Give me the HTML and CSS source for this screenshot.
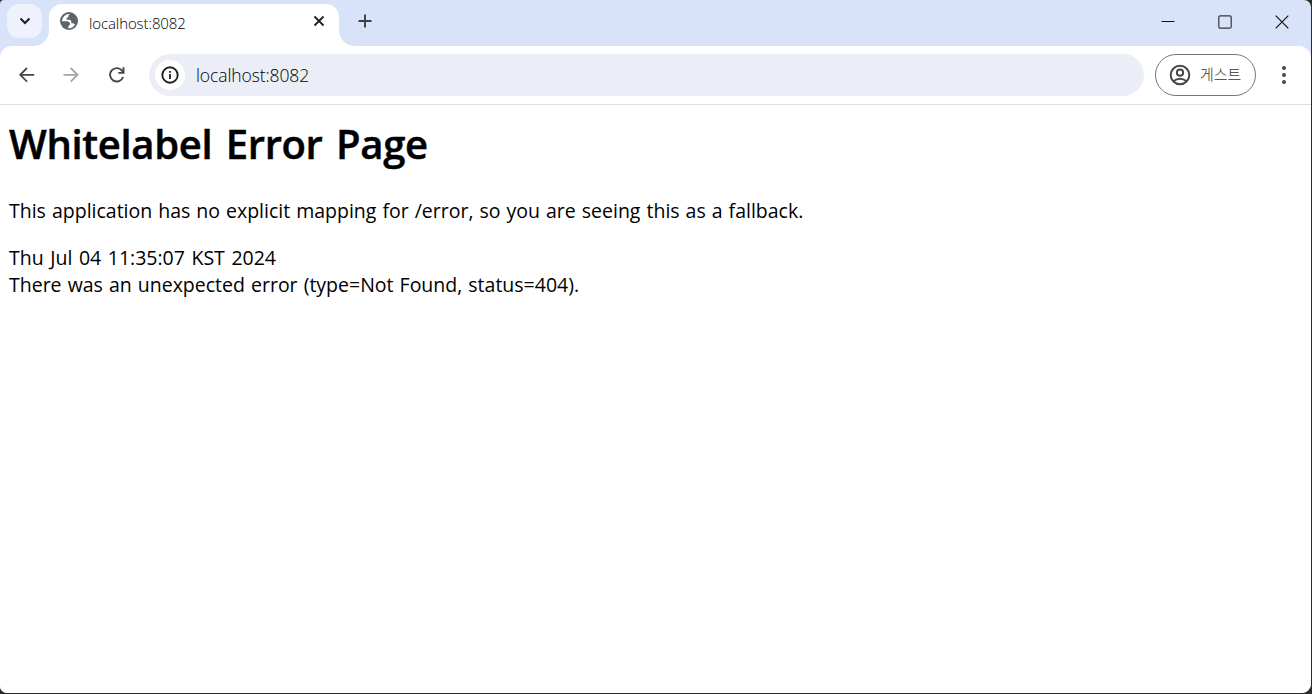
FILE: index.html
```
<!DOCTYPE html>
<html lang="ko">
<head>
<meta charset="utf-8">
<title>localhost:8082</title>
<link rel="stylesheet" href="styles.css">
</head>
<body>
<div class="window">
  <header class="tabstrip">
    <button class="tab-search" aria-label="Search tabs">
      <svg width="12" height="8" viewBox="0 0 12 8"><path d="M1.500 1.500 6 6l4.500-4.500" fill="none" stroke="#1f1f1f" stroke-width="2"/></svg>
    </button>
    <div class="tab">
      <svg class="globe" width="20" height="20" viewBox="0 0 20 20">
        <circle cx="10" cy="10" r="9" fill="#5f6368"/>
        <path d="M10.800 3.100 9.300 4.800v1.500L7.600 7.100v1.700H11l1.300 1.500v1.900h1.900l1.900 1.400A7.200 7.200 0 0 1 9.300 17.200v-1.800L11 13.600v-1.500L8.900 10.300H2.900A7.200 7.200 0 0 1 10.800 3.100Z" fill="#fff"/>
      </svg>
      <span class="tab-title">localhost:8082</span>
      <svg class="tab-close" width="12" height="12" viewBox="0 0 12 12"><path d="M1.500 1.500l9 9M10.500 1.500l-9 9" stroke="#1f1f1f" stroke-width="1.800"/></svg>
    </div>
    <svg class="new-tab" width="14" height="14" viewBox="0 0 14 14"><path d="M7 .5v13M.5 7h13" stroke="#3c3f43" stroke-width="1.900"/></svg>
    <div class="controls">
      <svg width="14" height="14" viewBox="0 0 14 14"><path d="M.5 6.500h13" stroke="#111" stroke-width="1"/></svg>
      <svg width="14" height="14" viewBox="0 0 14 14"><rect x=".8" y=".8" width="12.400" height="12.400" rx="1.500" fill="none" stroke="#333941" stroke-width="1.200"/></svg>
      <svg width="14" height="14" viewBox="0 0 14 14"><path d="M.7.7l12.600 12.600M13.300.7.7 13.300" stroke="#111" stroke-width="1.200"/></svg>
    </div>
  </header>
  <nav class="toolbar">
    <svg class="back" width="16" height="16" viewBox="0 0 16 16"><path d="M15.200 7.800H1.700M8 1 1.200 7.800l6.800 6.800" fill="none" stroke="#474747" stroke-width="1.800"/></svg>
    <svg class="forward" width="16" height="16" viewBox="0 0 16 16"><path d="M.5 7.800H14M7.700 1 14.500 7.800l-6.800 6.800" fill="none" stroke="#a5a5a5" stroke-width="1.800"/></svg>
    <svg class="reload" width="16" height="16" viewBox="0 0 16 16"><path d="M14.100 10A6.700 6.700 0 1 1 13 3.600L14.400 5.300M9.300 5.900H14.500V.3" fill="none" stroke="#474747" stroke-width="1.900"/></svg>
    <div class="omnibox">
      <span class="site-info">
        <svg width="18" height="18" viewBox="0 0 18 18"><circle cx="9" cy="9" r="7.700" fill="none" stroke="#1f1f1f" stroke-width="1.900"/><path d="M9 8v5M9 4.900v1.900" stroke="#1f1f1f" stroke-width="1.800"/></svg>
      </span>
      <span class="url">localhost:8082</span>
    </div>
    <div class="profile">
      <svg width="22" height="22" viewBox="0 0 22 22" fill="none" stroke="#474747" stroke-width="2"><circle cx="11" cy="11" r="9.300"/><circle cx="11" cy="8.700" r="3.100"/><path d="M4.300 17.200q6.700-5 13.400 0"/></svg>
      <span class="guest">게스트</span>
    </div>
    <svg class="menu" width="4" height="18" viewBox="0 0 4 18" fill="#474747"><circle cx="2" cy="2" r="2"/><circle cx="2" cy="9" r="2"/><circle cx="2" cy="16" r="2"/></svg>
  </nav>
  <main class="page">
    <h1>Whitelabel Error Page</h1>
    <p class="mapping">This application has no explicit mapping for /error, so you are seeing this as a fallback.</p>
    <div class="date">Thu Jul 04 11:35:07 KST 2024</div>
    <div class="detail">There was an unexpected error (type=Not Found, status=404).</div>
  </main>
</div>
</body>
</html>
```
FILE: styles.css
```
* { box-sizing: border-box; }
body {
  margin: 0;
  height: 694px;
  overflow: hidden;
  background: #2b2b2b;
  font-family: "Open Sans", "Noto Sans CJK KR", sans-serif;
}
svg { display: block; flex: none; }
.window {
  width: 1311px;
  height: 693px;
  border-radius: 4px 7px 9px 7px;
  overflow: hidden;
  background: #d8e2f9;
}
.tabstrip {
  display: flex;
  height: 46px;
  padding: 4px 22px 0 7px;
}
.tab-search {
  display: flex;
  align-items: center;
  justify-content: center;
  width: 35px;
  height: 34px;
  margin-right: 7px;
  padding: 0;
  border: 0;
  border-radius: 12px;
  background: #edf2fd;
}
.tab {
  position: relative;
  display: flex;
  width: 290px;
  height: 42px;
  padding: 7px 14px 0 10px;
  border-radius: 13px 13px 0 0;
  background: #fff;
}
.tab::before,
.tab::after {
  content: "";
  position: absolute;
  bottom: 0;
  width: 15px;
  height: 15px;
}
.tab::before {
  left: -15px;
  background: radial-gradient(circle at 0 0, transparent 14.500px, #fff 15px);
}
.tab::after {
  right: -15px;
  background: radial-gradient(circle at 100% 0, transparent 14.500px, #fff 15px);
}
.tab-title {
  margin-left: 10px;
  font-size: 15px;
  font-weight: 300;
  line-height: 24px;
  color: #000;
  letter-spacing: -0.1px;
  white-space: nowrap;
}
.tab-close { margin: 4px 0 0 auto; }
.new-tab { margin: 10px 0 0 19px; }
.controls {
  display: flex;
  gap: 43px;
  margin: 11px 0 0 auto;
}
.toolbar {
  display: flex;
  align-items: center;
  height: 59px;
  border-bottom: 1px solid #dedfe1;
  border-radius: 12px 12px 0 0;
  background: #fff;
}
.back { margin-left: 19px; }
.forward { margin-left: 28px; }
.reload { margin-left: 30px; }
.omnibox {
  display: flex;
  align-items: center;
  width: 995px;
  height: 42px;
  margin-left: 24px;
  padding-left: 6px;
  border-radius: 21px;
  background: #ebeef6;
}
.site-info {
  display: flex;
  align-items: center;
  justify-content: center;
  width: 30px;
  height: 30px;
  border-radius: 50%;
  background: #fff;
}
.url {
  margin-left: 11px;
  font-size: 17.500px;
  font-weight: 300;
  color: #000;
  letter-spacing: -0.1px;
}
.profile {
  display: flex;
  align-items: center;
  width: 101px;
  height: 42px;
  margin-left: 11px;
  padding-left: 13px;
  border: 1px solid #777;
  border-radius: 21px;
}
.guest {
  margin: -2px 0 0 9px;
  font-family: "Noto Sans CJK KR", sans-serif;
  font-size: 15px;
  font-weight: 300;
  line-height: 20px;
  color: #333;
  white-space: nowrap;
}
.menu { margin-left: 26px; }
.page {
  height: 588px;
  padding: 12px 9px 0;
  background: #fff;
  color: #000;
  font-size: 19.500px;
  line-height: 27px;
  white-space: nowrap;
}
.page h1 {
  margin: 0;
  font-size: 40px;
  font-weight: 600;
  line-height: 54px;
  letter-spacing: -0.350px;
  word-spacing: 3.500px;
  -webkit-text-stroke: 0.500px #000;
}
.mapping {
  margin: 26px 0 20px;
  word-spacing: 0.950px;
}
.date { word-spacing: 1.500px; }
.detail { word-spacing: 1px; }
```
